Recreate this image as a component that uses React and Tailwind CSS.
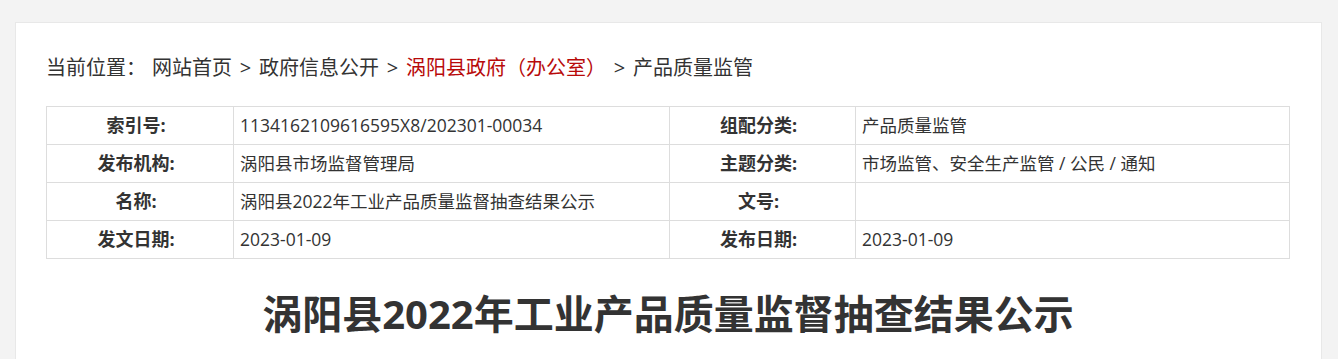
export default function App() {
  const rows = [
    ['索引号:', '1134162109616595X8/202301-00034', '组配分类:', '产品质量监管'],
    ['发布机构:', '涡阳县市场监督管理局', '主题分类:', '市场监管、安全生产监管 / 公民 / 通知'],
    ['名称:', '涡阳县2022年工业产品质量监督抽查结果公示', '文号:', ''],
    ['发文日期:', '2023-01-09', '发布日期:', '2023-01-09'],
  ];

  const Sep = () => <span className="inline-block w-[27px] text-center">&gt;</span>;

  return (
    <div
      className="min-h-[359px] bg-[#f3f3f3] pt-[22px] pl-[15px] pr-[16px]"
      style={{ fontFamily: '"Open Sans", "Noto Sans CJK SC", sans-serif' }}
    >
      <div className="bg-white border border-[#e8e8e8] border-b-0 pl-[30px] pr-[31px] pt-[31px] pb-[40px] text-[#333]">
        {/* breadcrumb */}
        <div className="text-[20px] leading-[28px] flex items-center whitespace-nowrap">
          <span>当前位置：</span>
          <span className="ml-[6px]">网站首页</span>
          <Sep />
          <span>政府信息公开</span>
          <Sep />
          <span className="text-[#b80a0a]">涡阳县政府（办公室）</span>
          <Sep />
          <span>产品质量监管</span>
        </div>

        {/* info table */}
        <table className="mt-[24px] w-full border-collapse text-[17.5px] table-fixed">
          <colgroup>
            <col className="w-[187px]" />
            <col className="w-[436px]" />
            <col className="w-[186px]" />
            <col />
          </colgroup>
          <tbody>
            {rows.map((r, i) => (
              <tr key={i} className="h-[38px]">
                <td className="border border-[#dddddd] text-center font-bold text-[18px] pr-[8px]">{r[0]}</td>
                <td className="border border-[#dddddd] pl-[6px]">{r[1]}</td>
                <td className="border border-[#dddddd] text-center font-bold text-[18px] pr-[8px]">{r[2]}</td>
                <td className="border border-[#dddddd] pl-[6px]">{r[3]}</td>
              </tr>
            ))}
          </tbody>
        </table>

        <h1 className="mt-[27px] text-center text-[40px] leading-[56px] font-bold text-[#333]">
          涡阳县2022年工业产品质量监督抽查结果公示
        </h1>
      </div>
    </div>
  );
}
